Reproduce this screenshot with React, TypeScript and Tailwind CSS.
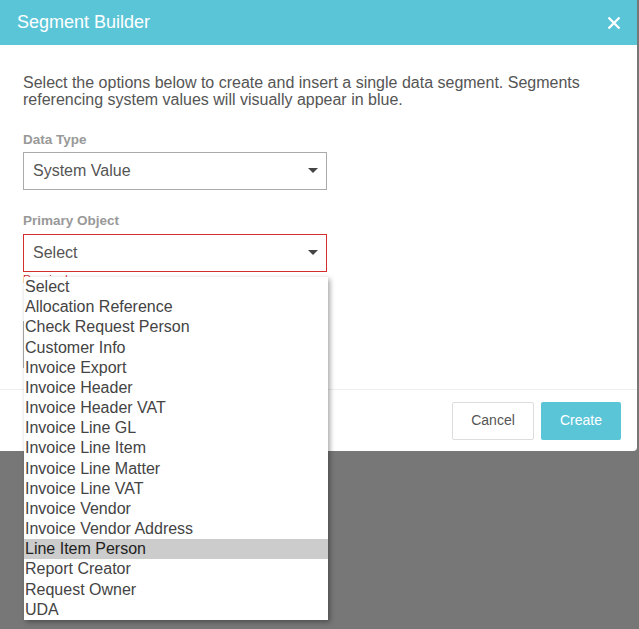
import { useState } from 'react';

const options = [
  'Select',
  'Allocation Reference',
  'Check Request Person',
  'Customer Info',
  'Invoice Export',
  'Invoice Header',
  'Invoice Header VAT',
  'Invoice Line GL',
  'Invoice Line Item',
  'Invoice Line Matter',
  'Invoice Line VAT',
  'Invoice Vendor',
  'Invoice Vendor Address',
  'Line Item Person',
  'Report Creator',
  'Request Owner',
  'UDA',
];

function Caret() {
  return (
    <svg width="10" height="6" viewBox="0 0 10 6" className="absolute right-[8px] top-1/2 -translate-y-1/2">
      <path d="M0 0 L10 0 L5 5 Z" fill="#444" />
    </svg>
  );
}

export default function App() {
  const [hover] = useState('Line Item Person');

  return (
    <div className="relative min-h-[629px] w-[639px] overflow-hidden bg-[#777777] font-['Liberation_Sans',Arial,sans-serif]">
      {/* modal */}
      <div className="relative h-[451px] w-[637px] rounded-br-[4px] bg-white">
        <div className="flex h-[45px] items-center justify-between bg-[#5bc5d8] pl-[17px] pr-[16px]">
          <span className="text-[18px] text-white">Segment Builder</span>
          <svg width="14" height="14" viewBox="0 0 14 14">
            <path d="M1.5 1.5 L12.5 12.5 M12.5 1.5 L1.5 12.5" stroke="white" strokeWidth="2.3" />
          </svg>
        </div>

        <div className="px-[23px] pt-[29px]">
          <p className="text-[16px] leading-[17px] text-[#555]">
            Select the options below to create and insert a single data segment. Segments referencing system values will visually appear in blue.
          </p>

          <div className="mt-[24px] text-[13.5px] font-bold leading-[16px] text-[#999]">Data Type</div>
          <div className="relative mt-[4px] flex h-[38px] w-[304px] items-center border border-[#aaa] pl-[9px] text-[16px] text-[#555]">
            System Value
            <Caret />
          </div>

          <div className="mt-[23px] text-[13.5px] font-bold leading-[16px] text-[#999]">Primary Object</div>
          <div className="relative mt-[5px] flex h-[38px] w-[304px] items-center border border-[#d32f2f] pl-[9px] text-[16px] text-[#555]">
            Select
            <Caret />
          </div>
          <div className="mt-[1px] text-[11px] leading-[12px] text-[#d32f2f]">Required</div>

          <div className="mt-[36px] h-[47px] w-[304px] border-l border-[#aaa]" />
        </div>

        <div className="absolute bottom-0 left-0 right-0 flex h-[62px] items-center justify-end gap-[7px] border-t border-[#eee] pr-[16px]">
          <button className="h-[38px] w-[82px] rounded-[2px] border border-[#ddd] bg-white text-[14px] text-[#555]">
            Cancel
          </button>
          <button className="h-[38px] w-[80px] rounded-[2px] bg-[#5bc5d8] text-[14px] text-white">Create</button>
        </div>
      </div>

      {/* open listbox */}
      <ul className="absolute left-[24px] top-[277px] w-[304px] bg-white shadow-[2px_2px_5px_rgba(0,0,0,0.35)]">
        {options.map((o) => (
          <li
            key={o}
            className={`h-[20.18px] pl-[1px] text-[16px] leading-[20px] ${
              o === hover ? 'bg-[#cccccc] text-[#222]' : 'text-[#444]'
            }`}
          >
            {o}
          </li>
        ))}
      </ul>
    </div>
  );
}
